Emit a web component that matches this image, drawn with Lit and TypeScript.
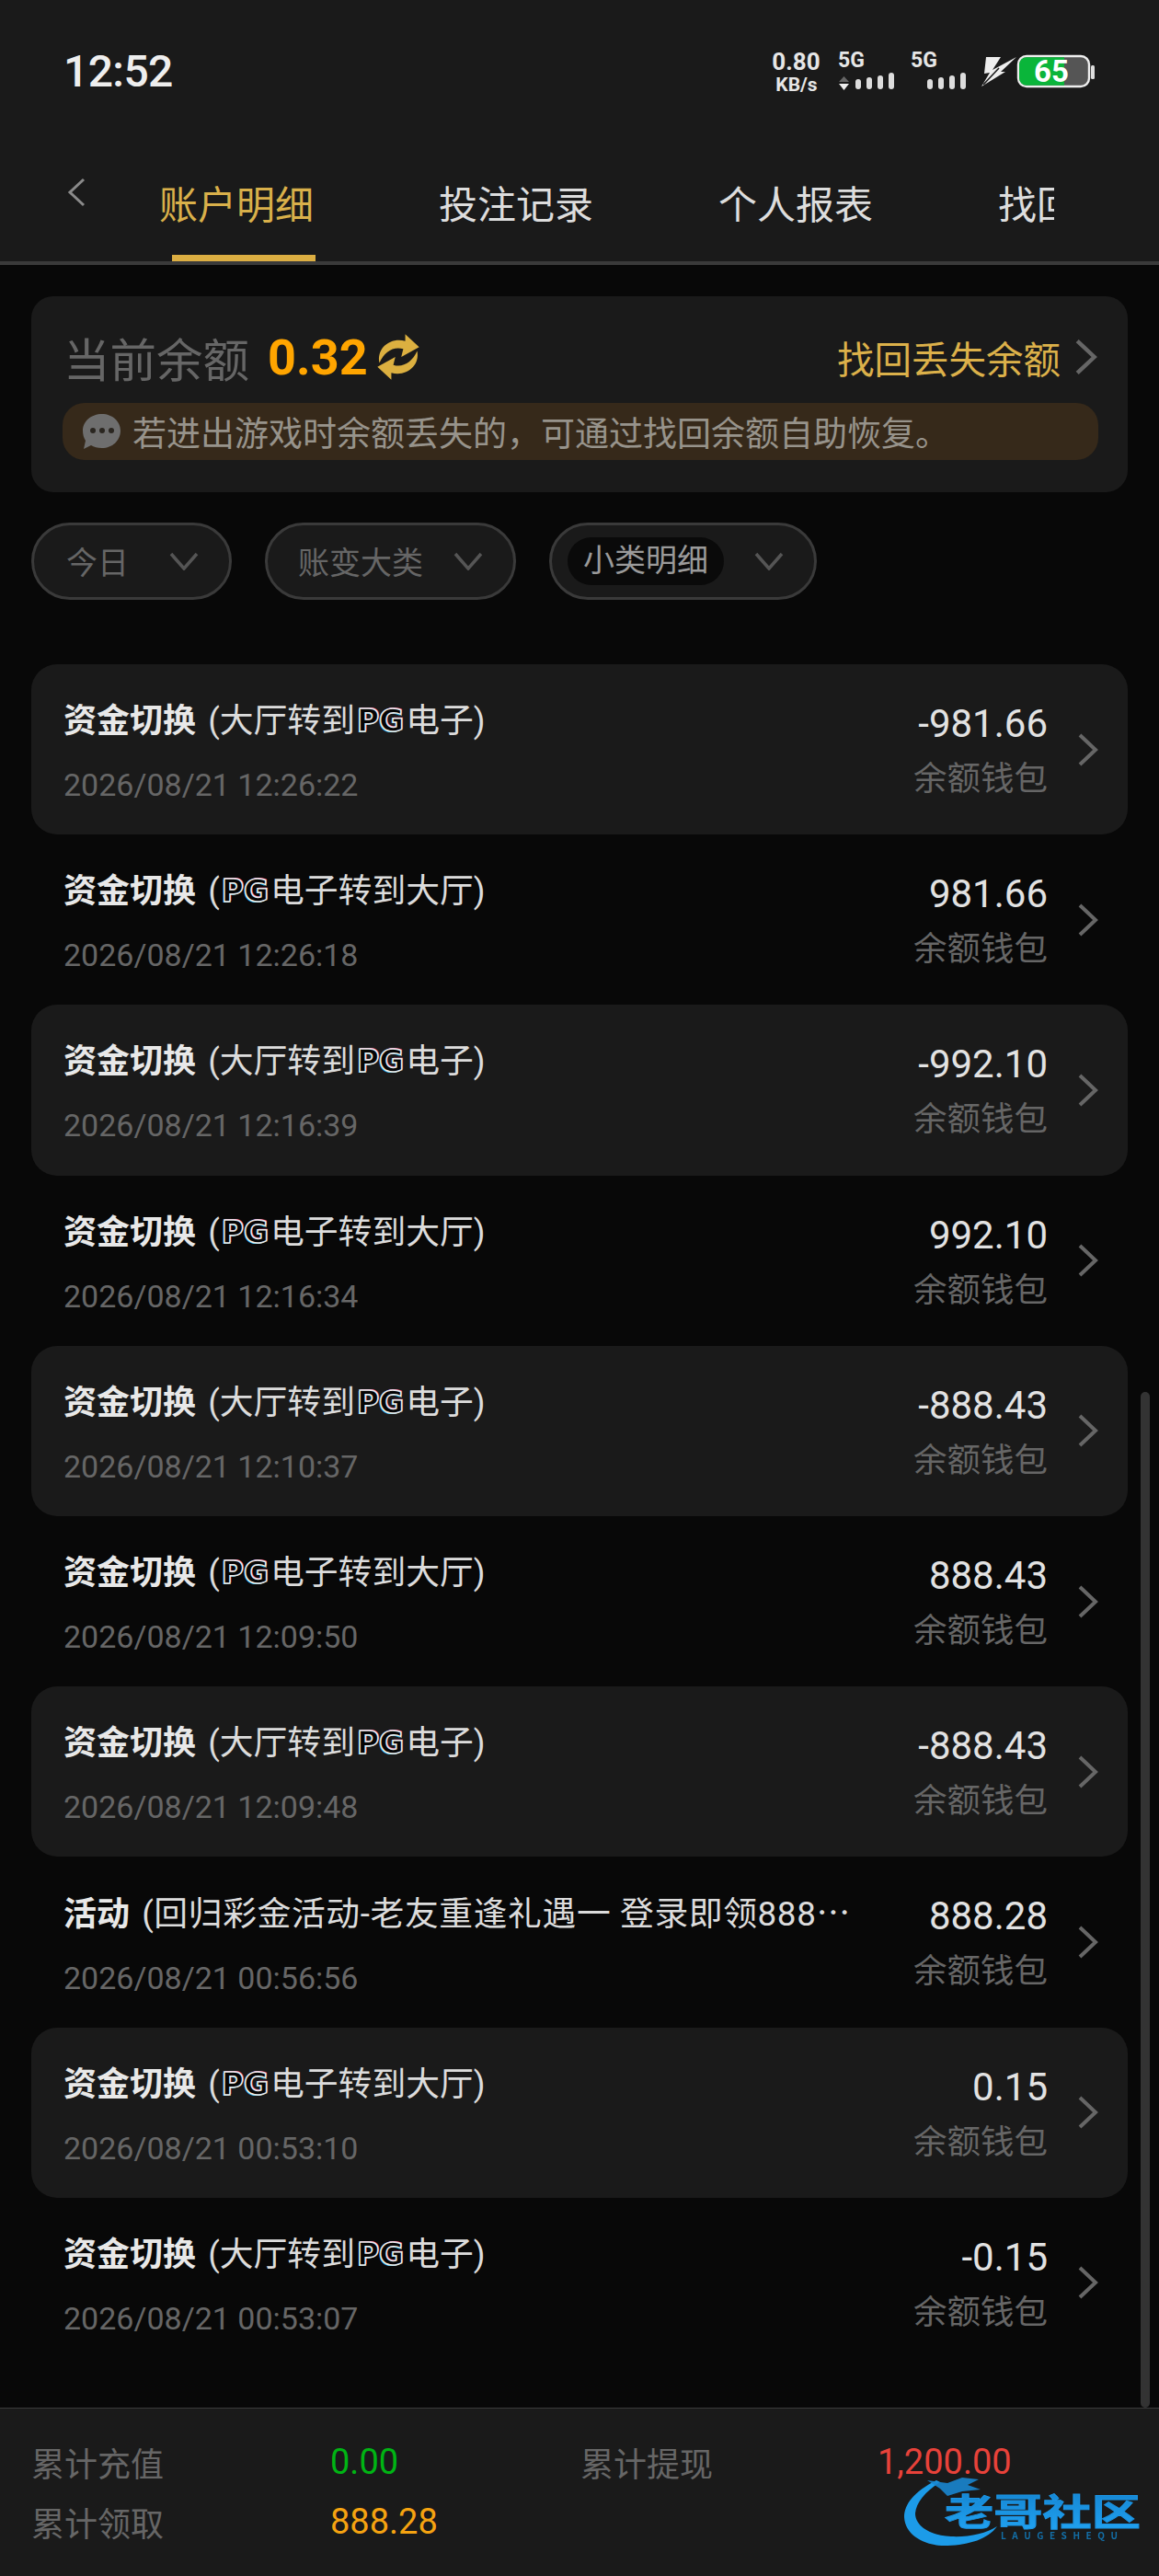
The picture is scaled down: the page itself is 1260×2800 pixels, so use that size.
import { LitElement, html, css, svg } from "lit";
import { customElement } from "lit/decorators.js";

const TO_PG = "to";
const FROM_PG = "from";

type Row = { kind: string; date: string; amount: string };

const rows: Row[] = [
  { kind: TO_PG, date: "2026/08/21 12:26:22", amount: "-981.66" },
  { kind: FROM_PG, date: "2026/08/21 12:26:18", amount: "981.66" },
  { kind: TO_PG, date: "2026/08/21 12:16:39", amount: "-992.10" },
  { kind: FROM_PG, date: "2026/08/21 12:16:34", amount: "992.10" },
  { kind: TO_PG, date: "2026/08/21 12:10:37", amount: "-888.43" },
  { kind: FROM_PG, date: "2026/08/21 12:09:50", amount: "888.43" },
  { kind: TO_PG, date: "2026/08/21 12:09:48", amount: "-888.43" },
  { kind: "activity", date: "2026/08/21 00:56:56", amount: "888.28" },
  { kind: FROM_PG, date: "2026/08/21 00:53:10", amount: "0.15" },
  { kind: TO_PG, date: "2026/08/21 00:53:07", amount: "-0.15" },
];

const bars = (x: number) => svg`
  <rect x=${x} y="86" width="6" height="11" rx="3" fill="#ddd"/>
  <rect x=${x + 12} y="84" width="6" height="13" rx="3" fill="#ddd"/>
  <rect x=${x + 24} y="82" width="6" height="15" rx="3" fill="#ddd"/>
  <rect x=${x + 36} y="79" width="6" height="18" rx="3" fill="#ddd"/>`;

const chevronRight = html`<svg class="cr" viewBox="0 0 22 36" width="22" height="36"><polyline points="2,2 19,18 2,34" fill="none" stroke="#666" stroke-width="4"/></svg>`;
const chevronDown = html`<svg class="cd" viewBox="0 0 32 20" width="32" height="20"><polyline points="2,2 16,18 30,2" fill="none" stroke="#555" stroke-width="3.5"/></svg>`;

const arc = svg`
  <path d="M3 31 C0 16 14 5 29 9 L29 2 L43 15 L25 25 L27 17 C17 14 8 20 3 31 Z"/>`;

@customElement("app-root")
export class AppRoot extends LitElement {
  static styles = css`
    :host {
      display: flex;
      flex-direction: column;
      width: 1260px;
      height: 2800px;
      background: #080808;
      font-family: Roboto, "Noto Sans CJK SC", sans-serif;
      overflow: hidden;
      position: relative;
    }
    header {
      background: #1a1a1a;
      border-bottom: 4px solid #3a3a3a;
      height: 288px;
      box-sizing: border-box;
      flex: none;
    }
    .status {
      height: 156px;
      box-sizing: border-box;
      padding: 50px 60px 0 69px;
      display: flex;
      justify-content: space-between;
      align-items: flex-start;
    }
    .time {
      font-size: 48px;
      font-weight: 500;
      line-height: 55px;
      color: #eee;
      letter-spacing: -0.6px;
    }
    .status svg text {
      font-family: Roboto, sans-serif;
      font-weight: 700;
      fill: #e6e6e6;
    }
    .tabs-row {
      display: flex;
      height: 128px;
      padding-left: 73px;
    }
    .back {
      margin-top: 37px;
      flex: none;
    }
    .tabs {
      display: flex;
      width: 1039px;
      margin-left: 14px;
      overflow: hidden;
    }
    .tab {
      flex: 0 0 304px;
      box-sizing: border-box;
      padding-left: 66px;
      position: relative;
      font-size: 42px;
      line-height: 136px;
      color: #ddd;
      white-space: nowrap;
    }
    .tab.on {
      color: #d9b04a;
    }
    .tab.on::after {
      content: "";
      position: absolute;
      left: 80px;
      width: 156px;
      bottom: 0;
      height: 7px;
      background: #dcae42;
    }
    main {
      flex: 1;
      position: relative;
      padding: 34px 34px 0;
      min-height: 0;
    }
    .scroll {
      position: absolute;
      right: 10px;
      bottom: 0;
      width: 10px;
      height: 1104px;
      border-radius: 5px;
      background: #333;
    }
    .card {
      background: #1a1a1a;
      border-radius: 24px;
      height: 213px;
      box-sizing: border-box;
      padding: 16px 32px 0 34px;
    }
    .bal {
      height: 100px;
      display: flex;
      align-items: center;
      padding: 0 1px 0 1px;
    }
    .bal .lab {
      font-size: 50.5px;
      color: #666;
    }
    .bal .val {
      margin-left: 20px;
      font-size: 54px;
      font-weight: 700;
      color: #ffa500;
    }
    .bal .ref {
      margin-left: 9px;
      flex: none;
    }
    .bal .find {
      margin-left: auto;
      font-size: 40.5px;
      color: #dcb14a;
    }
    .bal .cr {
      margin-left: 16px;
      width: 24px;
      height: 40px;
    }
    .notice {
      height: 62px;
      border-radius: 24px;
      background: #36291a;
      display: flex;
      align-items: center;
      padding-left: 20px;
      gap: 12px;
      font-size: 37px;
      color: #97938b;
      white-space: nowrap;
    }
    .filters {
      display: flex;
      gap: 36px;
      margin-top: 33px;
    }
    .f {
      height: 84px;
      box-sizing: border-box;
      border: 3px solid #3a3a3a;
      border-radius: 42px;
      background: #1a1a1a;
      display: flex;
      align-items: center;
      padding-right: 33px;
      font-size: 34px;
      color: #666;
    }
    .f span {
      margin-bottom: 2px;
    }
    .f1 { padding-left: 35px; gap: 44px; }
    .f2 { padding-left: 33px; gap: 33px; }
    .f3 { padding-left: 17px; gap: 33px; color: #9a9a9a; }
    .f3 .pill {
      height: 52px;
      line-height: 50px;
      padding: 0 17px;
      border-radius: 26px;
      background: #0a0a0a;
      margin-bottom: 0;
    }
    .list {
      margin-top: 70px;
    }
    .row {
      height: 185.2px;
      box-sizing: border-box;
      border-radius: 28px;
      padding: 0 32px 0 35px;
      display: flex;
      align-items: center;
    }
    .row:nth-child(odd) {
      background: #1a1a1a;
    }
    .left {
      flex: 1;
      min-width: 0;
      align-self: flex-start;
      padding-top: 37px;
    }
    .left.act-row {
      padding-top: 34px;
    }
    .title {
      font-size: 36.8px;
      line-height: 50px;
      color: #dcdcdc;
      white-space: nowrap;
    }
    .title b {
      font-size: 36px;
      font-weight: 700;
      color: #e8e8e8;
      margin-right: 4px;
    }
    .title .act {
      letter-spacing: 0.6px;
    }
    .title .dots {
      font-family: "Noto Sans CJK SC", sans-serif;
      letter-spacing: 0;
    }
    .pg {
      display: inline-block;
      font-family: "DejaVu Sans", sans-serif;
      font-weight: 700;
      font-size: 33px;
      line-height: 36px;
      color: #050505;
      -webkit-text-stroke: 1.5px #eee;
      text-shadow: -1px 1px 0 #27b5e0, 1px -1px 0 #f060b0;
      margin: 0 2px;
      vertical-align: 1px;
    }
    .date {
      margin-top: 19px;
      font-size: 34px;
      line-height: 50px;
      color: #666;
      white-space: nowrap;
    }
    .right {
      align-self: flex-start;
      padding-top: 40px;
      text-align: right;
    }
    .amt {
      font-size: 42px;
      line-height: 50px;
      color: #e2e2e2;
    }
    .wal {
      margin-top: 10px;
      font-size: 36.5px;
      line-height: 50px;
      color: #666;
    }
    .row .cr {
      margin-left: 33px;
      flex: none;
    }
    footer {
      flex: none;
      height: 183px;
      box-sizing: border-box;
      border-top: 1px solid #3a3a3a;
      background: #1a1a1a;
      padding: 25px 0 0 34px;
      display: grid;
      grid-template-columns: 325px 272px 323px 1fr;
      grid-auto-rows: 65px;
      align-items: center;
      font-size: 36px;
      color: #666;
      position: relative;
    }
    footer .v {
      font-size: 38px;
      font-weight: 400;
    }
    .green { color: #00b414; }
    .red { color: #e8423a; }
    .orange { color: #f5a311; }
    .logo {
      position: absolute;
      right: 10px;
      bottom: 20px;
      filter: blur(0.7px);
    }
    .logo text {
      font-family: "Noto Sans CJK SC", sans-serif;
      font-weight: 700;
    }
  `;

  private title(r: Row) {
    if (r.kind === "activity") {
      return html`<b>活动</b> <span class="act">(回归彩金活动-老友重逢礼遇一 登录即领888<span class="dots">⋯</span></span>`;
    }
    const pg = html`<span class="pg">PG</span>`;
    return r.kind === TO_PG
      ? html`<b>资金切换</b> (大厅转到${pg}电子)`
      : html`<b>资金切换</b> (${pg}电子转到大厅)`;
  }

  render() {
    return html`
      <header>
        <div class="status">
          <div class="time">12:52</div>
          <svg viewBox="830 50 370 55" width="370" height="55">
            <text x="865.5" y="76" font-size="26" text-anchor="middle">0.80</text>
            <text x="866" y="99" font-size="21" text-anchor="middle">KB/s</text>
            <text x="911" y="73" font-size="23">5G</text>
            <polygon points="917.5,83 923,89 912,89" fill="#666"/>
            <polygon points="912,91 923,91 917.5,98" fill="#eee"/>
            ${bars(930)}
            <text x="990" y="73" font-size="23">5G</text>
            ${bars(1008)}
            <polygon points="1072,62 1088,62 1079,76 1105,62 1088,78 1093,78 1067,94 1076,79 1070,80" fill="#eee"/>
            <path d="M1069 92 L1086 74" stroke="#1a1a1a" stroke-width="1.6"/>
            <rect x="1107" y="61" width="77" height="33" rx="9" fill="#555" stroke="#eee" stroke-width="2.4"/>
            <path d="M1157 62.2 H1116 a8 8 0 0 0 -8 8 V84.8 a8 8 0 0 0 8 8 H1157 Z" fill="#0ab53a"/>
            <rect x="1186" y="71" width="4" height="15" rx="1.5" fill="#ddd"/>
            <text x="1143" y="89" font-size="33" text-anchor="middle" style="fill:#fff">65</text>
          </svg>
        </div>
        <div class="tabs-row">
          <svg class="back" viewBox="0 0 20 32" width="20" height="32"><polyline points="18,2 3,16 18,30" fill="none" stroke="#8a8a8a" stroke-width="3"/></svg>
          <div class="tabs">
            <div class="tab on">账户明细</div>
            <div class="tab">投注记录</div>
            <div class="tab">个人报表</div>
            <div class="tab">找回</div>
          </div>
        </div>
      </header>
      <main>
        <div class="card">
          <div class="bal">
            <span class="lab">当前余额</span>
            <span class="val">0.32</span>
            <svg class="ref" viewBox="0 0 44 50" width="48" height="54">
              <g fill="#dcb040">${arc}</g>
              <g fill="#dcb040" transform="rotate(180 22 25)">${arc}</g>
            </svg>
            <span class="find">找回丢失余额</span>
            ${chevronRight}
          </div>
          <div class="notice">
            <svg viewBox="0 0 44 40" width="44" height="40">
              <path d="M23 1 C34 1 43 9 43 19 C43 30 34 38 23 38 C18 38 14 37 11 35 L3 39 L5 30 C3 27 2 23 2 19 C2 9 11 1 23 1 Z" fill="#6e6e6e"/>
              <circle cx="13" cy="19" r="3" fill="#2a2620"/>
              <circle cx="23" cy="19" r="3" fill="#2a2620"/>
              <circle cx="33" cy="19" r="3" fill="#2a2620"/>
            </svg>
            <span>若进出游戏时余额丢失的，可通过找回余额自助恢复。</span>
          </div>
        </div>
        <div class="filters">
          <div class="f f1"><span>今日</span>${chevronDown}</div>
          <div class="f f2"><span>账变大类</span>${chevronDown}</div>
          <div class="f f3"><span class="pill">小类明细</span>${chevronDown}</div>
        </div>
        <div class="list">
          ${rows.map(
            (r) => html`<div class="row">
              <div class="left ${r.kind === "activity" ? "act-row" : ""}">
                <div class="title">${this.title(r)}</div>
                <div class="date">${r.date}</div>
              </div>
              <div class="right">
                <div class="amt">${r.amount}</div>
                <div class="wal">余额钱包</div>
              </div>
              ${chevronRight}
            </div>`
          )}
        </div>
        <div class="scroll"></div>
      </main>
      <footer>
        <span>累计充值</span><span class="v green">0.00</span>
        <span>累计提现</span><span class="v red">1,200.00</span>
        <span>累计领取</span><span class="v orange">888.28</span>
        <svg class="logo" viewBox="970 2680 280 100" width="280" height="100">
          <defs>
            <linearGradient id="lg" x1="0" y1="0" x2="0" y2="1">
              <stop offset="0" stop-color="#1380cc"/>
              <stop offset="1" stop-color="#22a6f5"/>
            </linearGradient>
          </defs>
          <path d="M1018 2696 C994 2708 983 2722 983 2736 C984 2756 1006 2768 1030 2767 C1054 2766 1074 2760 1084 2746 C1072 2754 1052 2758 1034 2757 C1012 2756 995 2746 995 2732 C996 2720 1006 2708 1022 2698 Z" fill="#1c9be8"/>
          <path d="M1008 2696 L1030 2699 L1046 2693 L1064 2695 L1052 2701 L1066 2706 L1046 2708 L1030 2713 L1022 2705 Z" fill="#1a86d0" opacity=".9"/>
          <text x="1027" y="2745" font-size="40" textLength="213" lengthAdjust="spacingAndGlyphs" fill="url(#lg)" stroke="#1c94e4" stroke-width="1">老哥社区</text>
          <text x="1088" y="2760" font-size="10" textLength="127" fill="#136fa8">LAUGESHEQU</text>
        </svg>
      </footer>
    `;
  }
}
